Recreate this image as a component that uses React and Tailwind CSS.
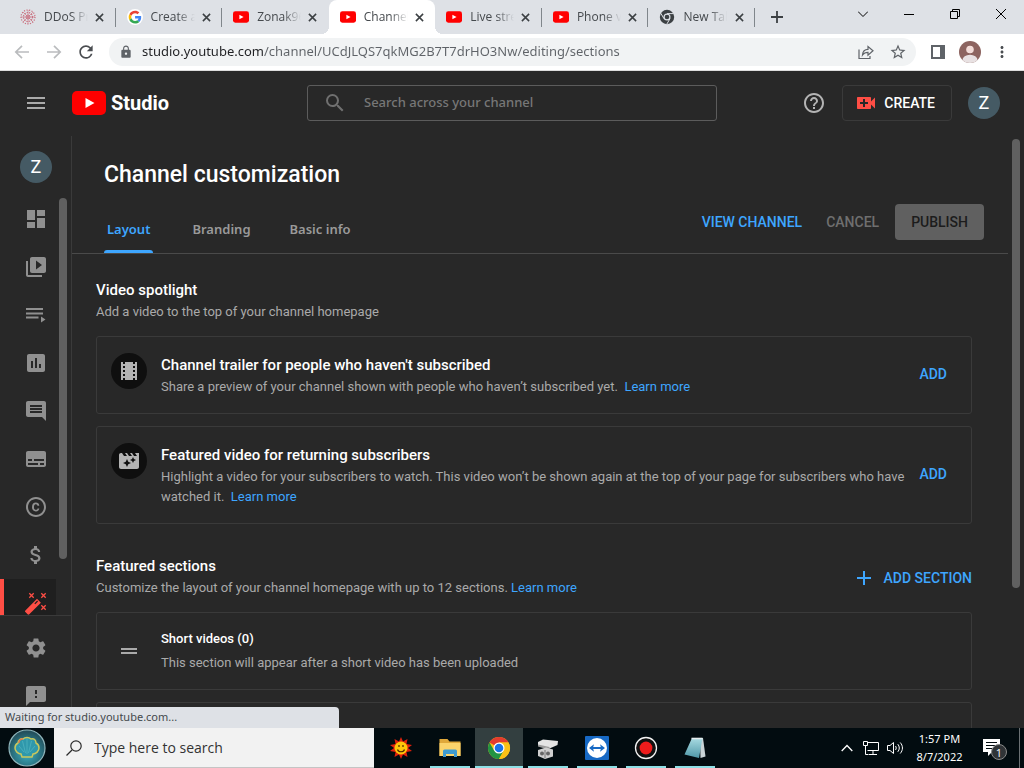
import React from "react";
import {
  MdDashboard,
  MdVideoLibrary,
  MdAssessment,
  MdComment,
  MdSubtitles,
  MdCopyright,
  MdAttachMoney,
  MdSettings,
  MdFeedback,
  MdLocalMovies,
  MdMovieFilter,
  MdVideoCall,
  MdHelpOutline,
  MdMenu,
  MdSearch,
  MdAdd,
  MdDragHandle,
  MdLock,
  MdStarBorder,
  MdMoreVert,
  MdRefresh,
} from "react-icons/md";

/* ---------- drawings ---------- */

function YouTubeMark({ className }) {
  return (
    <svg viewBox="0 0 34 24" className={className} aria-hidden="true">
      <rect width="34" height="24" rx="5" fill="#f00" />
      <path d="M13.5 7v10l9-5z" fill="#fff" />
    </svg>
  );
}

function BurstMark() {
  return (
    <svg viewBox="0 0 16 16" className="size-4 shrink-0" aria-hidden="true" fill="none" stroke="#c9707f">
      <circle cx="8" cy="8" r="2" strokeWidth="1" />
      <circle cx="8" cy="8" r="4.5" strokeWidth="1.2" strokeDasharray="1.4 1" />
      <circle cx="8" cy="8" r="7" strokeWidth="1.2" strokeDasharray="1.2 1.4" />
      <path d="M8 1v14M1 8h14M3 3l10 10M13 3L3 13" strokeWidth=".6" />
    </svg>
  );
}

function GoogleMark() {
  return (
    <svg viewBox="0 0 48 48" className="size-4 shrink-0" aria-hidden="true">
      <circle cx="24" cy="24" r="24" fill="#fff" />
      <g transform="translate(5 5) scale(.8)">
        <path fill="#EA4335" d="M24 9.5c3.54 0 6.71 1.22 9.21 3.6l6.85-6.85C35.9 2.38 30.47 0 24 0 14.62 0 6.51 5.38 2.56 13.22l7.98 6.19C12.43 13.72 17.74 9.5 24 9.5z" />
        <path fill="#4285F4" d="M46.98 24.55c0-1.57-.15-3.09-.38-4.55H24v9.02h12.94c-.58 2.96-2.26 5.48-4.78 7.18l7.73 6c4.51-4.18 7.09-10.36 7.09-17.65z" />
        <path fill="#FBBC05" d="M10.53 28.59c-.48-1.45-.76-2.99-.76-4.59s.27-3.14.76-4.59l-7.98-6.19C.92 16.46 0 20.12 0 24c0 3.88.92 7.54 2.56 10.78l7.97-6.19z" />
        <path fill="#34A853" d="M24 48c6.48 0 11.93-2.13 15.89-5.81l-7.73-6c-2.15 1.45-4.92 2.3-8.16 2.3-6.26 0-11.57-4.22-13.47-9.91l-7.98 6.19C6.51 42.62 14.62 48 24 48z" />
      </g>
    </svg>
  );
}

function ChromeMono() {
  return (
    <svg viewBox="0 0 16 16" className="size-4 shrink-0" aria-hidden="true">
      <circle cx="8" cy="8" r="7.2" fill="#3c4043" />
      <circle cx="8" cy="8" r="3.5" fill="#dee1e6" />
      <circle cx="8" cy="8" r="2.3" fill="#3c4043" />
      <path d="M8 4.6h6.6M5 9.7L1.7 4.1M11 9.7l-3.3 5.6" stroke="#dee1e6" strokeWidth="1" />
    </svg>
  );
}

function ChromeColor() {
  return (
    <svg viewBox="0 0 24 24" className="size-6" aria-hidden="true">
      <circle cx="12" cy="12" r="11" fill="#fbc116" />
      <path d="M12 12L2.47 6.5A11 11 0 0 1 21.53 6.5H12z" fill="#e33b2e" />
      <path d="M2.47 6.5A11 11 0 0 0 12 23l4.76-8.25L12 12 7.24 14.75z" fill="#229342" />
      <path d="M21.53 6.5H12v5.5l4.76 2.75L12 23a11 11 0 0 0 9.53-16.5z" fill="#fbc116" />
      <circle cx="12" cy="12" r="5.5" fill="#fff" />
      <circle cx="12" cy="12" r="4.3" fill="#1a73e8" />
    </svg>
  );
}

function CloseGlyph() {
  return (
    <svg viewBox="0 0 10 10" className="size-[9px]" aria-hidden="true">
      <path d="M1 1l8 8M9 1L1 9" stroke="#3c4043" strokeWidth="1.7" />
    </svg>
  );
}

function ArrowGlyph({ flip }) {
  return (
    <svg viewBox="0 0 16 16" className={flip ? "size-4 rotate-180" : "size-4"} aria-hidden="true">
      <path d="M15 8H2.2M8 1.8L1.8 8 8 14.2" fill="none" stroke="#babcbe" strokeWidth="1.7" />
    </svg>
  );
}

function PlaylistGlyph() {
  return (
    <svg viewBox="0 0 24 24" className="size-6" aria-hidden="true" fill="currentColor">
      <path d="M2 5h17v2H2zM2 9.500h17v2H2zM2 13.500h12.500v2H2zM17 13.500v6l4.500-3z" />
    </svg>
  );
}

function WandGlyph() {
  return (
    <svg viewBox="0 0 24 24" className="size-6" aria-hidden="true">
      <path fill="#ff4e45" d="M1.400 19.400L13 7.800l3.900 3.900L5.300 23.300a1.200 1.200 0 0 1-1.700 0l-2.200-2.200a1.200 1.200 0 0 1 0-1.700z" />
      <path stroke="#1f1f1f" strokeWidth="1.200" d="M10.800 12.800l2.800-2.800" />
      <path
        stroke="#ff4e45"
        strokeWidth="1.300"
        d="M5.300 2.300l4.400 4.400m0-4.400l-4.400 4.400M17.300 2.300l4.400 4.400m0-4.400l-4.400 4.400M17.300 14.300l4.400 4.400m0-4.400l-4.400 4.400"
      />
    </svg>
  );
}

function ShellMark() {
  return (
    <svg viewBox="0 0 38 38" className="size-[38px]" aria-hidden="true">
      <defs>
        <radialGradient id="orb" cx="50%" cy="65%" r="60%">
          <stop offset="0" stopColor="#3fb0c0" />
          <stop offset=".6" stopColor="#2b7684" />
          <stop offset="1" stopColor="#24505c" />
        </radialGradient>
      </defs>
      <circle cx="19" cy="19" r="18" fill="url(#orb)" stroke="#8fb5bb" strokeWidth="1.200" />
      <path
        d="M14 28l-1-3c-3 0-6-3-6-6 0-2 1-4 3-5 0-3 3-5 5-4 2-2 6-2 8 0 3-1 5 1 5 4 2 1 3 3 3 5 0 3-3 6-6 6l-1 3z"
        fill="#2f98ab"
        stroke="#c9c75c"
        strokeWidth="1.500"
      />
      <path d="M19 10v15M14.500 12l3 12M23.500 12l-3 12M11 17l5 6M27 17l-5 6" stroke="#4fb4bf" strokeWidth=".8" />
      <path d="M11 14c0-3 2-4 4-4" fill="none" stroke="#e07a4e" strokeWidth="1.400" />
    </svg>
  );
}

function SunMark() {
  return (
    <svg viewBox="0 0 24 24" className="size-6" aria-hidden="true">
      <path
        fill="#e0200c"
        d="M12 1l2 4.500 4.500-2.500-1 5 5.500 1-4 3 4 3-5.500 1 1 5-4.500-2.500L12 23l-2-4.500L5.500 21l1-5L1 15l4-3-4-3 5.500-1-1-5L10 5.500z"
      />
      <circle cx="12" cy="12" r="6.500" fill="#ffc60a" />
      <path d="M8.500 13.500c1 3 6 3 7 0M10 9v2M14 9v2" fill="none" stroke="#4a2a00" strokeWidth="1.200" />
    </svg>
  );
}

function FolderMark() {
  return (
    <svg viewBox="0 0 24 24" className="size-6" aria-hidden="true">
      <path fill="#e0a83a" d="M1.500 3h8l2 2.500h11V20h-21z" />
      <path fill="#fbd36b" d="M1.500 7h21v13h-21z" />
      <path fill="#3f9bd0" d="M6.500 13.500h11A1.500 1.500 0 0 1 19 15v6h-3v-3H8v3H5v-6a1.500 1.500 0 0 1 1.500-1.500z" />
    </svg>
  );
}

function GadgetMark() {
  return (
    <svg viewBox="0 0 24 24" className="size-6" aria-hidden="true">
      <path fill="#e4e4e4" d="M2 6l5-2.500 15 1.500-.5 4-8 3.500L2 9z" />
      <path fill="#9b9b9b" d="M2 8.500L13.500 11v3L2 10.500z" />
      <path fill="#cfcfcf" d="M2 14l8-2.500 7 2v7L9 23l-7-3z" />
      <circle cx="6" cy="17.500" r="2" fill="#666" />
      <circle cx="12" cy="17.500" r="2" fill="#666" />
      <path d="M9 14v8" stroke="#777" />
    </svg>
  );
}

function TeamMark() {
  return (
    <svg viewBox="0 0 24 24" className="size-6" aria-hidden="true">
      <rect width="24" height="24" rx="1" fill="#1769c4" />
      <circle cx="12" cy="12" r="10" fill="#fff" />
      <path fill="#1769c4" d="M4 12l5-3.800-.8 2.800h7.600L15 8.200l5 3.800-5 3.800.8-2.800H8.200l.8 2.800z" />
    </svg>
  );
}

function RecordMark() {
  return (
    <svg viewBox="0 0 24 24" className="size-6" aria-hidden="true">
      <circle cx="12" cy="12" r="10.500" fill="#111" stroke="#f2f2f2" strokeWidth="1.300" />
      <circle cx="12" cy="12" r="6.400" fill="#ee1c1c" />
    </svg>
  );
}

function NotepadMark() {
  return (
    <svg viewBox="0 0 24 24" className="size-6" aria-hidden="true">
      <defs>
        <linearGradient id="pad" x1="0" y1="0" x2="0" y2="1">
          <stop offset="0" stopColor="#a9dbe2" />
          <stop offset="1" stopColor="#4f98a8" />
        </linearGradient>
      </defs>
      <path fill="#c9d3d6" d="M17 2h3l2.500 18.500-5 1.500z" />
      <path fill="url(#pad)" d="M9 2h10.500L16 22 1.500 18.500z" />
      <path d="M8.500 2.500h11" stroke="#e6eef0" strokeWidth="1.600" />
    </svg>
  );
}

/* ---------- browser chrome ---------- */

const tabs = [
  { title: "DDoS Protection", icon: <BurstMark />, line: true },
  { title: "Create a channel", icon: <GoogleMark />, line: true },
  { title: "Zonak96 - YouTube", icon: <YouTubeMark className="h-3 w-4 shrink-0" /> },
  { title: "Channel customization", icon: <YouTubeMark className="h-3 w-4 shrink-0" />, active: true },
  { title: "Live streaming", icon: <YouTubeMark className="h-3 w-4 shrink-0" />, line: true },
  { title: "Phone verification", icon: <YouTubeMark className="h-3 w-4 shrink-0" />, line: true },
  { title: "New Tab", icon: <ChromeMono />, line: true },
];

function TabStrip() {
  return (
    <div className="flex h-[34px] shrink-0 items-stretch bg-[#dee1e6] pl-[9px]">
      <div className="flex w-[746px]">
        {tabs.map((t) => (
          <div
            key={t.title}
            className={
              t.active
                ? "relative flex min-w-0 flex-1 items-center rounded-t-lg bg-white pl-[11px] pr-2"
                : "relative flex min-w-0 flex-1 items-center pl-[11px] pr-2"
            }
          >
            {t.icon}
            <span className="ml-2 w-11 overflow-hidden whitespace-nowrap text-xs text-[#45494d] [mask-image:linear-gradient(90deg,#000_60%,transparent)]">
              {t.title}
            </span>
            <button aria-label={`Close ${t.title}`} className="ml-auto flex size-4 shrink-0 items-center justify-center">
              <CloseGlyph />
            </button>
            {t.line && <span className="absolute right-0 top-2 h-[19px] w-px bg-[#80868b]" />}
            {t.active && (
              <>
                <span className="absolute -left-2 bottom-0 size-2 bg-[radial-gradient(circle_at_0_0,#dee1e6_8px,#fff_8px)]" />
                <span className="absolute -right-2 bottom-0 size-2 bg-[radial-gradient(circle_at_100%_0,#dee1e6_8px,#fff_8px)]" />
              </>
            )}
          </div>
        ))}
      </div>
      <button aria-label="New tab" className="ml-1.5 flex w-8 items-center justify-center">
        <svg viewBox="0 0 12 12" className="size-3" aria-hidden="true">
          <path d="M6 0v12M0 6h12" stroke="#3c4043" strokeWidth="1.800" />
        </svg>
      </button>
      <div className="ml-auto flex h-7 text-black">
        <button aria-label="Search tabs" className="flex w-[46px] items-center justify-center">
          <svg viewBox="0 0 10 6" className="h-1.5 w-2.5" aria-hidden="true">
            <path d="M0 .5l5 5 5-5" fill="none" stroke="currentColor" />
          </svg>
        </button>
        <button aria-label="Minimize" className="flex w-[46px] items-center justify-center">
          <svg viewBox="0 0 10 10" className="size-2.5" aria-hidden="true">
            <path d="M0 5.500h10" stroke="currentColor" />
          </svg>
        </button>
        <button aria-label="Restore" className="flex w-[46px] items-center justify-center">
          <svg viewBox="0 0 10 10" className="size-2.5" aria-hidden="true">
            <path d="M.5 2.500h7v7h-7zM2.500 2.500v-2h7v7h-2" fill="none" stroke="currentColor" />
          </svg>
        </button>
        <button aria-label="Close window" className="flex w-[46px] items-center justify-center">
          <svg viewBox="0 0 10 10" className="size-2.5" aria-hidden="true">
            <path d="M0 0l10 10M10 0L0 10" stroke="currentColor" />
          </svg>
        </button>
      </div>
    </div>
  );
}

function Toolbar() {
  return (
    <div className="flex h-[37px] shrink-0 items-center border-b border-[#dcdcdc] bg-white pl-1.5 pr-1.5">
      <button aria-label="Back" className="flex w-8 justify-center">
        <ArrowGlyph />
      </button>
      <button aria-label="Forward" className="flex w-8 justify-center">
        <ArrowGlyph flip />
      </button>
      <button aria-label="Reload" className="flex w-8 justify-center text-[#4a4d51]">
        <MdRefresh className="size-5" />
      </button>
      <div className="ml-[7px] flex h-7 flex-1 items-center rounded-full bg-[#f1f3f4] pl-2.5 pr-0.5 text-[#5f6368]">
        <MdLock className="size-3.5" />
        <input
          aria-label="Address"
          defaultValue="studio.youtube.com/channel/UCdJLQS7qkMG2B7T7drHO3Nw/editing/sections"
          className="ml-[9px] min-w-0 flex-1 bg-[linear-gradient(90deg,#202124_121px,#5f6368_121px)] bg-clip-text font-['Noto_Sans',sans-serif] text-[13px] text-transparent outline-none"
        />
        <button aria-label="Share" className="flex w-8 justify-center">
          <svg viewBox="0 0 16 16" className="size-4" aria-hidden="true" fill="none" stroke="currentColor" strokeWidth="1.200">
            <path d="M1 5.500v9h11v-2.500" />
            <path d="M4.500 11c.3-3.600 2.500-5.600 5.500-5.600V2.500l5 4.300-5 4.300V8.300c-2.400 0-4.200.8-5.500 2.700z" />
          </svg>
        </button>
        <button aria-label="Bookmark" className="flex w-8 justify-center">
          <MdStarBorder className="size-[18px]" />
        </button>
      </div>
      <button aria-label="Side panel" className="ml-1.5 flex w-8 justify-center">
        <svg viewBox="0 0 14 14" className="size-3.5" aria-hidden="true">
          <path d="M1 1h12v12H1z" fill="none" stroke="#5f6368" strokeWidth="2" />
          <path d="M9 1h4v12H9z" fill="#5f6368" />
        </svg>
      </button>
      <button aria-label="Profile" className="flex w-8 justify-center">
        <svg viewBox="0 0 22 22" className="size-[22px]" aria-hidden="true">
          <defs>
            <clipPath id="face">
              <circle cx="11" cy="11" r="11" />
            </clipPath>
          </defs>
          <g clipPath="url(#face)">
            <rect width="22" height="22" fill="#8d6460" />
            <circle cx="11" cy="8.500" r="3.800" fill="#f3dcd8" />
            <ellipse cx="11" cy="19" rx="7.500" ry="5.200" fill="#e8e1e2" />
          </g>
        </svg>
      </button>
      <button aria-label="Browser menu" className="flex w-8 justify-center text-[#4a4d51]">
        <MdMoreVert className="size-[18px]" />
      </button>
    </div>
  );
}

/* ---------- studio ---------- */

function Avatar() {
  return (
    <span className="flex size-8 shrink-0 items-center justify-center rounded-full bg-[#455a64] text-lg leading-none text-white">
      Z
    </span>
  );
}

function StudioHeader() {
  return (
    <header className="flex h-[65px] shrink-0 items-center pb-px pr-6">
      <div className="flex w-[307px] shrink-0 items-center">
        <button aria-label="Menu" className="ml-6 text-[#aaa]">
          <MdMenu className="size-6" />
        </button>
        <a href="#studio" className="ml-6 flex items-center gap-[5px] text-white">
          <YouTubeMark className="h-6 w-[34px]" />
          <span className="text-xl font-bold leading-6">Studio</span>
        </a>
      </div>
      <label className="flex h-9 flex-1 items-center rounded-[3px] border border-[#5c5c5c]">
        <MdSearch className="ml-[15px] size-6 text-[#707070]" />
        <span className="sr-only">Search</span>
        <input
          type="search"
          placeholder="Search across your channel"
          className="ml-[17px] min-w-0 flex-1 bg-transparent font-['Noto_Sans',sans-serif] text-[13px] font-medium text-white outline-none placeholder:text-[#777]"
        />
      </label>
      <button aria-label="Help" className="ml-[85px] text-[#b4b4b4]">
        <MdHelpOutline className="size-6" />
      </button>
      <button className="ml-4 flex h-9 items-center gap-1.5 rounded-sm border border-[#3a3a3a] pl-[11px] pr-4 text-sm font-medium text-white">
        <MdVideoCall className="size-6 text-[#ff4e45]" />
        CREATE
      </button>
      <button aria-label="Account" className="ml-4">
        <Avatar />
      </button>
    </header>
  );
}

const navItems = [
  ["Dashboard", <MdDashboard className="size-6" />],
  ["Content", <MdVideoLibrary className="size-6" />],
  ["Playlists", <PlaylistGlyph />],
  ["Analytics", <MdAssessment className="size-6" />],
  ["Comments", <MdComment className="size-6" />],
  ["Subtitles", <MdSubtitles className="size-6" />],
  ["Copyright", <MdCopyright className="size-6" />],
  ["Earn", <MdAttachMoney className="size-6" />],
];

function Sidebar() {
  return (
    <aside className="flex w-[72px] shrink-0 flex-col border-r border-[#3a3a3a] text-[#909090]">
      <div className="flex h-[59px] shrink-0 items-end pb-3 pl-5">
        <a href="#channel" aria-label="Your channel">
          <Avatar />
        </a>
      </div>
      <div className="flex min-h-0 flex-1 overflow-hidden border-b border-[#3a3a3a]">
        <nav className="flex w-14 flex-col">
          {navItems.map(([name, icon]) => (
            <a key={name} href={`#${name}`} aria-label={name} className="flex h-12 shrink-0 items-center pl-6">
              {icon}
            </a>
          ))}
          <a
            href="#Customization"
            aria-label="Customization"
            className="flex h-12 shrink-0 items-center border-l-4 border-[#ff4e45] bg-[#1f1f1f] pl-5"
          >
            <WandGlyph />
          </a>
        </nav>
        <div className="ml-[3px] mt-[3px] h-[361px] w-2 rounded-full bg-[#606060]" />
      </div>
      <div className="flex h-[112px] shrink-0 flex-col overflow-hidden pt-2">
        <a href="#settings" aria-label="Settings" className="flex h-12 shrink-0 items-center pl-6">
          <MdSettings className="size-6" />
        </a>
        <a href="#feedback" aria-label="Send feedback" className="flex h-12 shrink-0 items-center pl-6">
          <MdFeedback className="size-6" />
        </a>
      </div>
    </aside>
  );
}

function Card({ icon, title, children }) {
  return (
    <article className="flex items-stretch rounded-[3px] border border-[#3a3a3a] pb-4 pl-3.5 pr-6 pt-4">
      <span className="flex size-9 shrink-0 items-center justify-center rounded-full bg-[#0f0f0f] text-[#b4b4b4]">
        {icon}
      </span>
      <div className="ml-3.5 min-w-0 flex-1 pt-0.5">
        <h3 className="text-[15px] font-medium leading-5 text-white">{title}</h3>
        <p className="mt-0.5 text-[13px] leading-5 text-[#aaa]">{children}</p>
      </div>
      <button className="ml-3.5 pb-0.5 text-sm font-medium text-[#3ea6ff]">ADD</button>
    </article>
  );
}

function More() {
  return (
    <a href="#learn" className="text-[#3ea6ff]">
      Learn more
    </a>
  );
}

function Main() {
  return (
    <main className="flex min-w-0 flex-1 overflow-hidden">
      <div className="min-w-0 flex-1">
        <h1 className="pl-8 pt-[23px] text-[23px] font-medium leading-8 text-white">Channel customization</h1>
        <div className="flex h-[63px] items-end border-b border-[#4a4a4a] pl-8 pr-6">
          <div role="tablist" className="flex gap-[39px] font-['Noto_Sans',sans-serif] text-[13px] font-semibold leading-5 text-[#9a9a9a]">
            <button role="tab" aria-selected="true" className="flex flex-col items-center text-[#3ea6ff]">
              <span className="px-[3px] pb-[11px]">Layout</span>
              <span className="h-[3px] w-full rounded-t-sm bg-[#3ea6ff]" />
            </button>
            <button role="tab" aria-selected="false" className="pb-3.5">Branding</button>
            <button role="tab" aria-selected="false" className="pb-3.5">Basic info</button>
          </div>
          <div className="mb-[13px] ml-auto flex items-center text-sm font-medium">
            <a href="#view" className="text-[#3ea6ff]">VIEW CHANNEL</a>
            <button className="ml-6 text-[#6f6f6f]">CANCEL</button>
            <button className="ml-4 h-9 rounded-sm bg-[#606060] px-4 text-[#1c1c1c]">PUBLISH</button>
          </div>
        </div>
        <div className="pl-6 pr-9 pt-[26px]">
          <h2 className="text-[15px] font-medium leading-5 text-white">Video spotlight</h2>
          <p className="mt-0.5 text-[13px] leading-5 text-[#aaa]">Add a video to the top of your channel homepage</p>
          <div className="mt-3.5 flex flex-col gap-3">
            <Card icon={<MdLocalMovies className="size-6" />} title="Channel trailer for people who haven't subscribed">
              Share a preview of your channel shown with people who haven’t subscribed yet.&nbsp; <More />
            </Card>
            <Card icon={<MdMovieFilter className="size-6" />} title="Featured video for returning subscribers">
              Highlight a video for your subscribers to watch. This video won’t be shown again at the top of your page for
              subscribers who have watched it.&nbsp; <More />
            </Card>
          </div>
          <div className="mt-8 flex items-center">
            <div>
              <h2 className="text-[15px] font-medium leading-5 text-white">Featured sections</h2>
              <p className="mt-0.5 text-[13px] leading-5 text-[#aaa]">
                Customize the layout of your channel homepage with up to 12 sections. <More />
              </p>
            </div>
            <button className="ml-auto flex items-center gap-2 pt-0.5 text-sm font-medium text-[#3ea6ff]">
              <MdAdd className="size-6" />
              ADD SECTION
            </button>
          </div>
          <div className="mt-3.5 flex flex-col gap-3">
            <article className="flex h-[78px] items-center rounded-[3px] border border-[#3a3a3a] pl-5">
              <MdDragHandle className="size-6 text-[#aaa]" />
              <div className="ml-5">
                <h3 className="text-[13px] font-medium leading-6 text-white">Short videos (0)</h3>
                <p className="text-[13px] leading-6 text-[#aaa]">This section will appear after a short video has been uploaded</p>
              </div>
            </article>
            <article className="h-[78px] rounded-[3px] border border-[#3a3a3a]" />
          </div>
        </div>
      </div>
      <div className="ml-1 mr-1 mt-[3px] h-[449px] w-2 shrink-0 rounded-full bg-[#606060]" />
    </main>
  );
}

/* ---------- taskbar ---------- */

const apps = [
  ["Weather", <SunMark />, ""],
  ["File Explorer", <FolderMark />, "w-10"],
  ["Chrome", <ChromeColor />, "w-12"],
  ["Gadgets", <GadgetMark />, "w-10"],
  ["TeamViewer", <TeamMark />, "w-10"],
  ["Recorder", <RecordMark />, "w-10"],
  ["Notepad", <NotepadMark />, "w-10"],
];

function Taskbar() {
  return (
    <footer className="flex h-10 shrink-0 bg-[#020c10] font-['Open_Sans','Noto_Sans',sans-serif] text-white">
      <button aria-label="Start" className="flex w-[54px] items-center justify-center">
        <ShellMark />
      </button>
      <label className="flex w-80 items-center border-b border-[#c4c4c4] bg-[#f2f2f2] pl-3 text-[#2b2b2b]">
        <svg viewBox="0 0 16 16" className="size-4 shrink-0" aria-hidden="true">
          <path d="M.5 15.500L6 10" stroke="currentColor" strokeWidth="1.200" />
          <circle cx="10" cy="6" r="5.200" fill="none" stroke="currentColor" strokeWidth="1.200" />
        </svg>
        <span className="sr-only">Search Windows</span>
        <input
          placeholder="Type here to search"
          className="ml-3 min-w-0 flex-1 bg-transparent text-sm outline-none placeholder:text-[#333]"
        />
      </label>
      <div className="ml-[3px] flex gap-px">
        {apps.map(([name, icon, bar]) => (
          <button
            key={name}
            aria-label={name}
            className={
              name === "Chrome"
                ? "flex w-12 flex-col items-center bg-[#333f40]"
                : "flex w-12 flex-col items-center"
            }
          >
            <span className="flex flex-1 items-center pt-0.5">{icon}</span>
            <span className={`h-0.5 ${bar} bg-[#8de0e6]`} />
          </button>
        ))}
      </div>
      <div className="ml-auto flex items-center">
        <button aria-label="Show hidden icons" className="flex w-6 justify-center">
          <svg viewBox="0 0 12 8" className="h-2 w-3" aria-hidden="true">
            <path d="M.7 7L6 1.500 11.300 7" fill="none" stroke="#fff" strokeWidth="1.300" />
          </svg>
        </button>
        <button aria-label="Network" className="flex w-6 justify-center">
          <svg viewBox="0 0 16 16" className="size-4" aria-hidden="true" fill="none" stroke="#fff">
            <path d="M4.500 2.500h11v8h-11M10 10.500v4M6 14.500h8M.5 1.500h4v4h-4zM2.500 5.500v9h3" />
          </svg>
        </button>
        <button aria-label="Volume" className="flex w-6 justify-center">
          <svg viewBox="0 0 17 16" className="h-4 w-[17px]" aria-hidden="true" fill="none" stroke="#fff">
            <path d="M.5 5.500h2.500l3.500-3v11l-3.500-3H.5zM8.500 6c.9 1.200.9 2.800 0 4M10.800 4.200c2 2.300 2 5.300 0 7.600M13.200 2.500c3 3.300 3 7.700 0 11" />
          </svg>
        </button>
        <div className="ml-1.5 w-[53px] whitespace-nowrap text-center font-['Noto_Sans',sans-serif] text-[11px] leading-[18px]">
          <div>1:57 PM</div>
          <div>8/7/2022</div>
        </div>
        <button aria-label="1 notification" className="relative ml-[17px] mr-3 flex size-6 items-center">
          <svg viewBox="0 0 18 18" className="size-[18px]" aria-hidden="true">
            <path fill="#fff" d="M0 0h17v13H9l-4 4v-4H0z" />
            <path d="M3 3.500h11M3 6.500h11M3 9.500h8" stroke="#020c10" />
          </svg>
          <span className="absolute left-2 top-2 flex size-4 items-center justify-center rounded-full border border-[#8a8a8a] bg-[#303437] text-[11px] leading-none">
            1
          </span>
        </button>
        <span className="mr-1 h-10 w-px bg-[#6b7174]" />
      </div>
    </footer>
  );
}

export default function App() {
  return (
    <div className="flex h-screen flex-col overflow-hidden bg-[#282828] font-['Roboto',sans-serif]">
      <div className="shrink-0 font-['Open_Sans','Noto_Sans',sans-serif]">
        <TabStrip />
        <Toolbar />
      </div>
      <div className="relative flex min-h-0 flex-1 flex-col">
        <StudioHeader />
        <div className="flex min-h-0 flex-1">
          <Sidebar />
          <Main />
        </div>
        <div className="absolute bottom-0 left-0 flex h-[21px] w-[339px] items-center rounded-tr bg-[#dee1e6] pl-[5px] font-['Noto_Sans',sans-serif] text-[11px] text-[#45494d]">
          Waiting for studio.youtube.com...
        </div>
      </div>
      <Taskbar />
    </div>
  );
}
